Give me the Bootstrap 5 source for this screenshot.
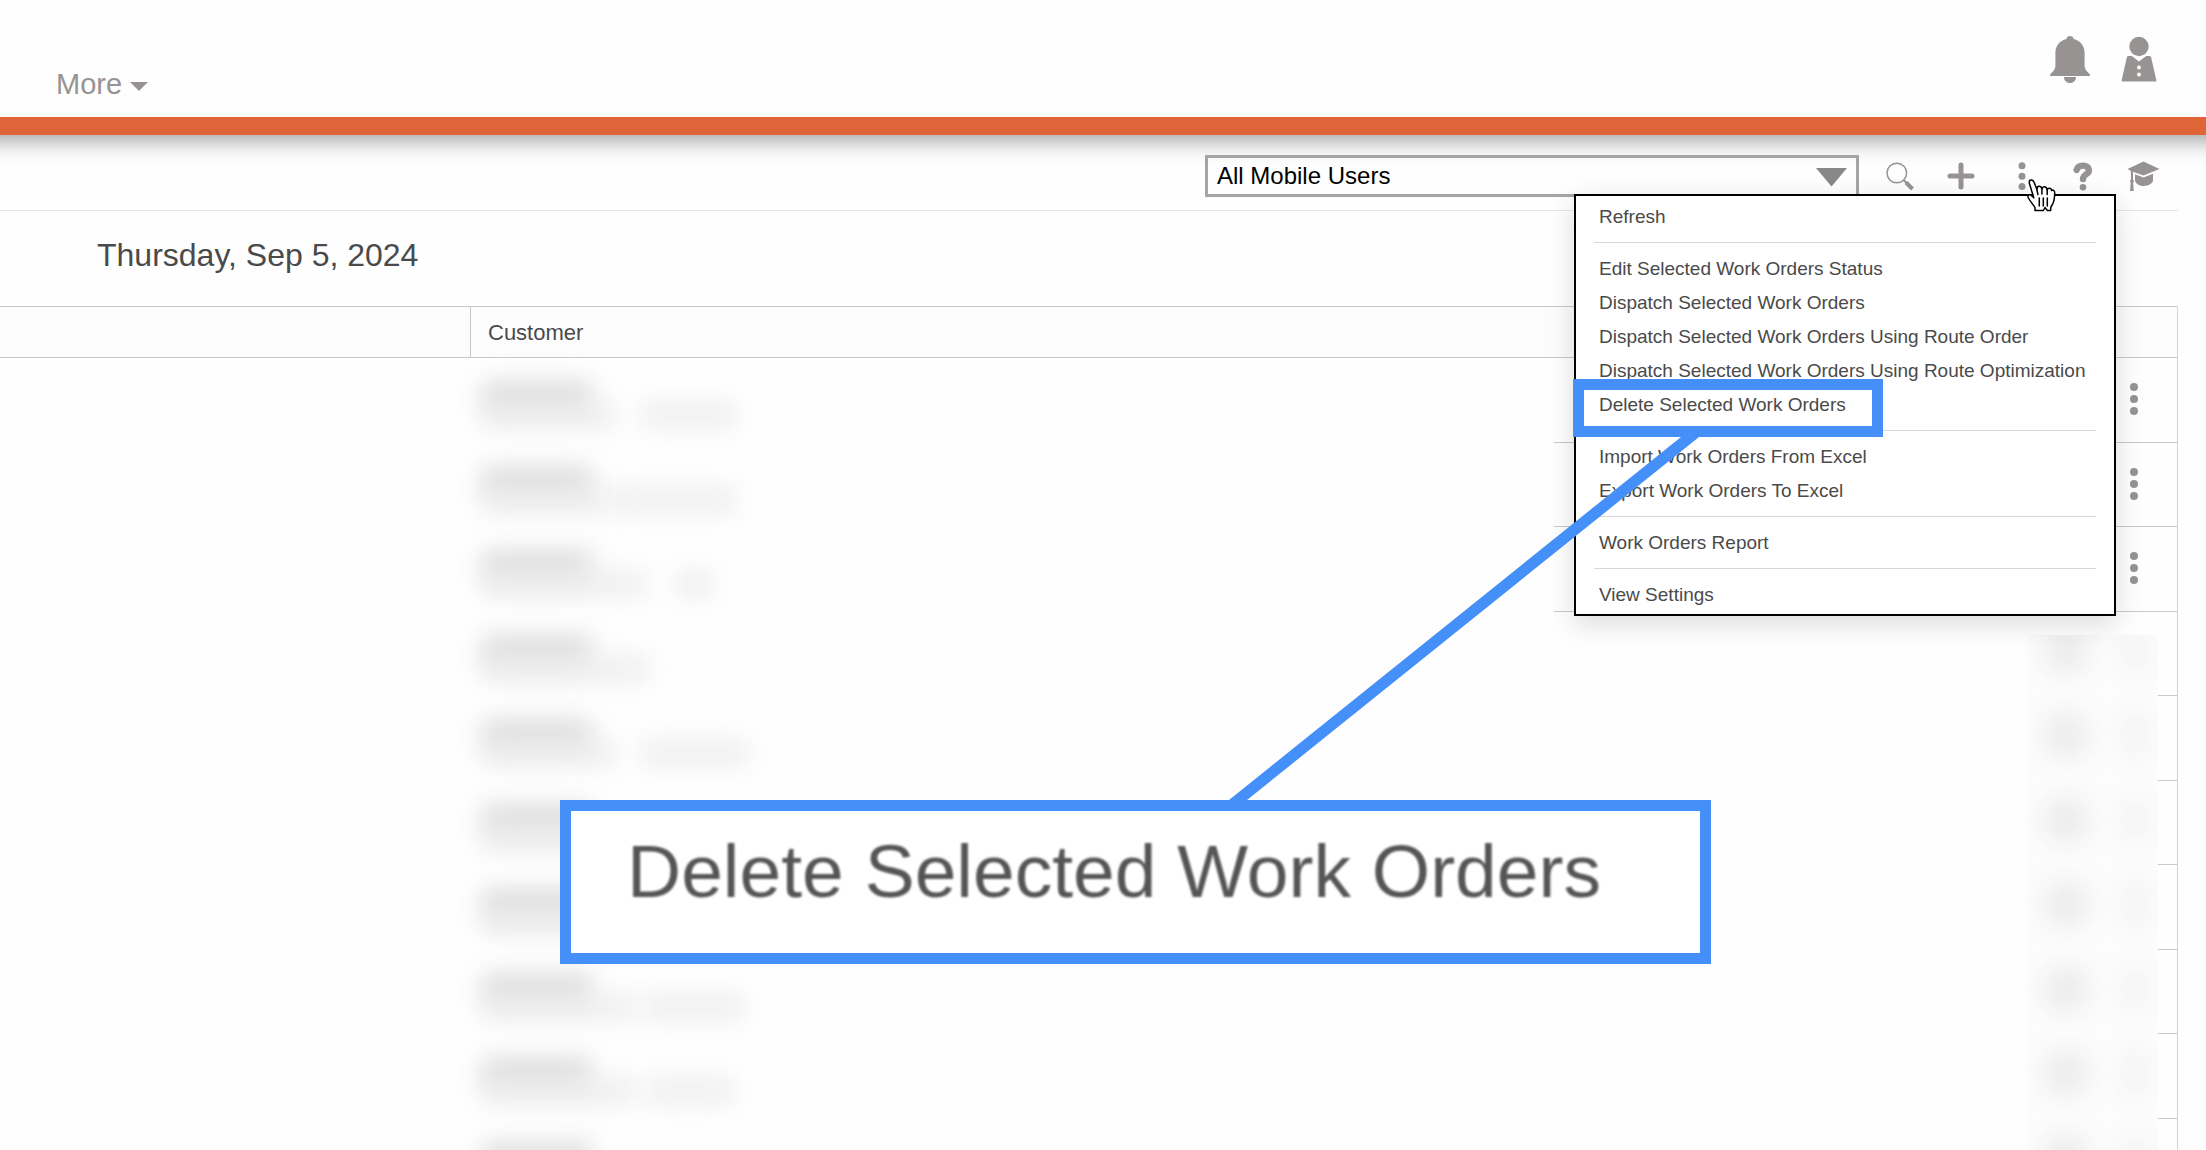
<!DOCTYPE html>
<html lang="en">
<head>
<meta charset="utf-8">
<meta name="viewport" content="width=device-width, initial-scale=1">
<title>Work Orders</title>
<link href="https://cdn.jsdelivr.net/npm/bootstrap@5.3.0/dist/css/bootstrap.min.css" rel="stylesheet">
<style>
  :root { --ink: #4a4a4a; --icon: #979393; --accent: #448ff8; --rule: #c9c9c9; }
  body { font-family: "Liberation Sans", Arial, sans-serif; color: var(--ink); background: #fefefe; }
  svg { display: block; }
  .icon-fill { fill: var(--icon); }

  /* header */
  .topbar { height: 135px; padding: 2px 49px 0 56px; background: #fefefe; border-bottom: 18px solid #df6437; box-shadow: 0 -18px 22px 22px rgba(0,0,0,.42); }
  .topbar-icons { gap: 30px; }
  .more-btn { margin-top: 48px; font-size: 29px; line-height: 40px; color: var(--icon); }
  .more-btn::after { border-top: 9px solid; border-left: 9px solid transparent; border-right: 9px solid transparent; margin-left: 8px; vertical-align: 3px; }

  /* toolbar */
  .toolbar { margin-right: 28px; padding: 20px 4px 13px 0; border-bottom: 1px solid #e6e6e6; }
  .user-pick { width: 654px; margin-right: 10px; }
  .user-pick select { appearance: none; height: 42px; padding: 0 9px; border: 3px solid #a5a5a5; border-radius: 0; background: transparent; color: #000; font-size: 24px; line-height: 30px; }
  .user-pick svg { right: 12px; top: 13px; pointer-events: none; }
  .tool { width: 61px; height: 42px; }

  /* action menu */
  .action-menu { top: 39px; right: -64px; left: auto; width: 542px; padding: 4px 0 2px; border: 2px solid #000; border-radius: 0; background: #fff; box-shadow: 0 8px 26px rgba(0,0,0,.14); z-index: 1000; }
  .action-menu .dropdown-item { padding: 0 23px; font-size: 19px; line-height: 34px; color: var(--ink); }
  .action-menu .dropdown-divider { margin: 8px 18px 9px; border-color: #d8d8d8; opacity: 1; }
  .picked-frame { left: -3px; top: -9px; width: 310px; height: 58px; border: 11px solid var(--accent); pointer-events: none; z-index: 2; }
  .hand { top: 24px; left: 36px; z-index: 1200; }

  .day-title { padding: 24px 97px 31px; font-size: 32px; line-height: 40px; }

  /* work order grid */
  .orders-wrap { margin-right: 28px; }
  .orders { table-layout: fixed; width: 100%; border-collapse: separate; border-spacing: 0; border-right: 1px solid #d4d4d4; }
  .orders th { height: 52px; padding: 0 17px; font-size: 22px; font-weight: 400; background: #fcfcfc; border-top: 1px solid var(--rule); border-bottom: 1px solid var(--rule); }
  .orders th:first-child { border-right: 1px solid var(--rule); }
  .orders td { height: 85px; padding: 0; vertical-align: top; }
  .orders tr:nth-child(even) td { height: 84px; }
  .orders td.ruled { border-bottom: 1px solid var(--rule); }
  .col-first { width: 471px; } .col-tools { width: 604px; } .col-edge { width: 19px; }
  .veil { position: relative; height: 84px; }
  .veil-name, .veil-note { position: absolute; height: 22px; filter: blur(12px); }
  .veil-name { left: 12px; top: 24px; width: 108px; height: 32px; background: #dcdcdc; }
  .veil-note { top: 46px; background: #ececec; }
  .row-dots { padding: 25px 20px 0 0; }
  .hidden-tools { width: 131px; height: 85px; overflow: hidden; background: #fcfcfc; }
  .orders tr:nth-child(even) .hidden-tools { height: 84px; }
  .orders tr:nth-child(even) .hidden-tools.from-mid { height: 61px; margin-top: 23px; }
  .blob-a, .blob-b { border-radius: 50%; filter: blur(12px); }
  .blob-a { width: 44px; height: 46px; background: #ebebeb; margin-left: 17px; margin-top: 16px; }
  .blob-b { width: 26px; height: 46px; background: #f2f2f2; margin-left: 34px; margin-top: 16px; }
  .from-mid .blob-a, .from-mid .blob-b { margin-top: -8px; }

  /* enlarged label */
  .callout { top: 800px; right: 495px; width: 1151px; height: 164px; border: 11px solid var(--accent); background: #fff; z-index: 1100; padding: 12px 56px; font-size: 75px; line-height: 96px; color: #555; }
  .callout-text { filter: blur(1px); }
  .leader { position: absolute; right: -15px; bottom: 100%; fill: var(--accent); }
</style>
</head>
<body>
<div class="vh-100 overflow-hidden position-relative">

  <header class="topbar d-flex justify-content-between align-items-center position-relative">
    <button type="button" class="more-btn btn p-0 border-0 dropdown-toggle">More</button>
    <div class="topbar-icons d-flex">
      <button type="button" class="btn p-0 border-0" aria-label="Notifications">
        <svg width="42" height="48" viewBox="0 0 42 48" class="icon-fill"><path d="M21 0c2 0 3.400 1.200 3.600 3 7 1.800 11 7 11 14v13c0 3 2 5 4.500 7.500.8.900 1 1.700 1 2.500H1c0-.8.200-1.600 1-2.500C4.500 35 6.400 33 6.400 30V17c0-7 4-12.200 11-14C17.600 1.200 19 0 21 0z"/><path d="M15 41h12c0 3.600-2.500 6-6 6s-6-2.400-6-6z"/></svg>
      </button>
      <button type="button" class="btn p-0 border-0" aria-label="Account">
        <svg width="36" height="48" viewBox="0 0 36 48" class="icon-fill"><circle cx="18" cy="10.500" r="9.700"/><path fill-rule="evenodd" d="M7.500 20h3.300L18 25.500 25.200 20h3.300c1 0 1.500.6 1.800 2l5 22c.2 1-.2 1.500-1 1.500H1.700c-.8 0-1.200-.5-1-1.500l5-22c.3-1.400.8-2 1.800-2zM18 29.500a2 2 0 1 0 0 4 2 2 0 0 0 0-4zm0 7a2 2 0 1 0 0 4 2 2 0 0 0 0-4z"/></svg>
      </button>
    </div>
  </header>

  <div class="toolbar d-flex justify-content-end align-items-center">
    <div class="user-pick position-relative">
      <select class="w-100 d-block" aria-label="Mobile users"><option>All Mobile Users</option></select>
      <svg class="position-absolute" width="31" height="19" viewBox="0 0 31 19"><path d="M0 0h31L15.500 18.500z" fill="#888"/></svg>
    </div>
    <button type="button" class="tool btn p-0 border-0 d-flex align-items-center justify-content-center" aria-label="Search">
      <svg width="28" height="29" viewBox="0 0 28 29" fill="none" stroke="#979393"><circle cx="10.800" cy="11" r="9.800" stroke-width="1.500"/><path d="M17.600 18l3 3" stroke-width="2"/><path d="M20 20.500l6.500 6.500" stroke-width="4"/></svg>
    </button>
    <button type="button" class="tool btn p-0 border-0 d-flex align-items-center justify-content-center" aria-label="Add">
      <svg width="28" height="28" viewBox="0 0 28 28" stroke="#979393" stroke-width="5" stroke-linecap="round"><path d="M14 3v22M3 14h22"/></svg>
    </button>
    <div class="dropdown position-relative">
      <button type="button" class="tool btn p-0 border-0 d-flex align-items-center justify-content-center" aria-label="Actions">
        <svg width="8" height="28" viewBox="0 0 8 28" class="icon-fill"><circle cx="4" cy="3.800" r="3.500"/><circle cx="4" cy="14.200" r="3.500"/><circle cx="4" cy="24.500" r="3.500"/></svg>
      </button>
      <ul class="action-menu dropdown-menu show">
        <li><a class="dropdown-item" href="#">Refresh</a></li>
        <li><hr class="dropdown-divider"></li>
        <li><a class="dropdown-item" href="#">Edit Selected Work Orders Status</a></li>
        <li><a class="dropdown-item" href="#">Dispatch Selected Work Orders</a></li>
        <li><a class="dropdown-item" href="#">Dispatch Selected Work Orders Using Route Order</a></li>
        <li><a class="dropdown-item" href="#">Dispatch Selected Work Orders Using Route Optimization</a></li>
        <li class="position-relative"><a class="dropdown-item" href="#">Delete Selected Work Orders</a><span class="picked-frame position-absolute"></span></li>
        <li><hr class="dropdown-divider"></li>
        <li><a class="dropdown-item" href="#">Import Work Orders From Excel</a></li>
        <li><a class="dropdown-item" href="#">Export Work Orders To Excel</a></li>
        <li><hr class="dropdown-divider"></li>
        <li><a class="dropdown-item" href="#">Work Orders Report</a></li>
        <li><hr class="dropdown-divider"></li>
        <li><a class="dropdown-item" href="#">View Settings</a></li>
      </ul>
      <!-- pointing hand over the actions button -->
      <svg class="hand position-absolute" width="29" height="33" viewBox="0 0 29 33" fill="#fff" stroke="#000" stroke-width="1.500" stroke-linejoin="round" stroke-linecap="round"><path d="M8 31.500v-3C6 25 3 22.500 1.200 18.500c-.7-2 .5-3.200 2-2.700 1.500.6 2.300 2 3.600 3L2.600 5C1.800 2 2.600 1 4.200 1S6.700 2 7.300 3.800l2.600 6.700c0-4 4-4.300 5-.5 1-3.400 4.700-2.700 5.300.8 1-2.500 4.200-2 4.500.8 1.600-1.300 3 .2 3 2.200 0 4.700-.2 8-2.200 11.500-1 1.800-1.800 2.400-1.800 3.700v2.500h-3.300L18 28.500l-1.600 3z"/><path d="M9.900 10.500l1 5M14.900 10.500v4.500M20.200 11v4.500M12.300 19v8M16.300 19v8M20.300 19v8"/></svg>
    </div>
    <button type="button" class="tool btn p-0 border-0 d-flex align-items-center justify-content-center" aria-label="Help">
      <svg width="20" height="29" viewBox="0 0 20 29"><path d="M3.600 8C4.200 5 6.500 3.600 10 3.600c3.800 0 5.900 1.800 5.900 4.800 0 4-5.900 3.800-5.900 8.600" fill="none" stroke="#979393" stroke-width="6.400" stroke-linecap="round"/><circle cx="10" cy="25.200" r="3.300" class="icon-fill"/></svg>
    </button>
    <button type="button" class="tool btn p-0 border-0 d-flex align-items-center justify-content-center" aria-label="Training">
      <svg width="33" height="31" viewBox="0 0 33 31" class="icon-fill"><path d="M16.500.5L32.500 8l-16 6.500L6 10.800v7.700c1.200.8 1.200 2.200.2 3l.6 8.500H3l.7-8.500c-1-.8-1-2.200.2-3V10L.5 8z"/><path d="M8 13.200l8.500 3.300 9.500-3.700v7c-1 3.200-5 5.200-9 5.200-4.200 0-8-2-9-5z"/></svg>
    </button>
  </div>

  <h1 class="day-title m-0 fw-normal">Thursday, Sep 5, 2024</h1>

  <div class="orders-wrap">
    <table class="orders">
      <colgroup><col class="col-first"><col><col class="col-tools"><col class="col-edge"></colgroup>
      <thead><tr><th></th><th scope="col">Customer</th><th></th><th></th></tr></thead>
      <tbody id="orderRows"></tbody>
    </table>
  </div>

  <div class="callout position-absolute">
    <svg class="leader" width="486" height="375" viewBox="0 0 486 375"><path d="M0 364L452 1h18L18 364v11H0z"/></svg>
    <div class="callout-text text-nowrap">Delete Selected Work Orders</div>
  </div>
</div>

<script src="https://cdn.jsdelivr.net/npm/bootstrap@5.3.0/dist/js/bootstrap.bundle.min.js"></script>
<script>
  // Obscured note runs per row: [left, width] pairs in the customer column
  const notes = [
    [[14, 130], [172, 92]], [[14, 120], [140, 124]], [[14, 160], [206, 36]], [[14, 164]],
    [[14, 130], [172, 104]], [[14, 140]], [[14, 140]], [[14, 150], [174, 98]], [[14, 150], [176, 86]], []
  ];
  const dots = '<svg width="8" height="32" viewBox="0 0 8 32" class="icon-fill"><circle cx="4" cy="4" r="4"/><circle cx="4" cy="16" r="4"/><circle cx="4" cy="28" r="4"/></svg>';
  document.getElementById('orderRows').innerHTML = notes.map((runs, i) => {
    const open = i < 3;
    const bars = runs.map(r => `<span class="veil-note" style="left:${r[0]}px;width:${r[1]}px"></span>`).join('');
    const tools = open
      ? `<div class="row-dots d-flex justify-content-end">${dots}</div>`
      : `<div class="hidden-tools ms-auto d-flex${i === 3 ? ' from-mid' : ''}"><span class="blob-a"></span><span class="blob-b"></span></div>`;
    return `<tr><td></td><td><div class="veil"><span class="veil-name"></span>${bars}</div></td><td class="${open ? 'ruled' : ''}">${tools}</td><td class="ruled"></td></tr>`;
  }).join('');
</script>
</body>
</html>
